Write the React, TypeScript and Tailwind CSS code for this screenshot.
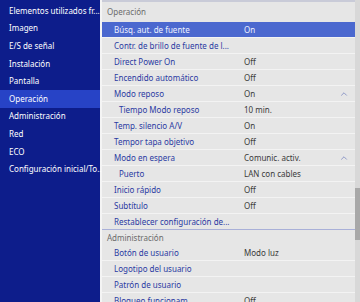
import { ChevronUp } from 'lucide-react';

const menu = [
    'Elementos utilizados fr...',
    'Imagen',
    'E/S de señal',
    'Instalación',
    'Pantalla',
    'Operación',
    'Administración',
    'Red',
    'ECO',
    'Configuración inicial/To...',
];

type Row = { label: string; value?: string; sub?: boolean; open?: boolean; active?: boolean; header?: boolean };

const rows: Row[] = [
    { label: 'Operación', header: true },
    { label: 'Búsq. aut. de fuente', value: 'On', active: true },
    { label: 'Contr. de brillo de fuente de l...' },
    { label: 'Direct Power On', value: 'Off' },
    { label: 'Encendido automático', value: 'Off' },
    { label: 'Modo reposo', value: 'On', open: true },
    { label: 'Tiempo Modo reposo', value: '10 min.', sub: true },
    { label: 'Temp. silencio A/V', value: 'On' },
    { label: 'Tempor tapa objetivo', value: 'Off' },
    { label: 'Modo en espera', value: 'Comunic. activ.', open: true },
    { label: 'Puerto', value: 'LAN con cables', sub: true },
    { label: 'Inicio rápido', value: 'Off' },
    { label: 'Subtítulo', value: 'Off' },
    { label: 'Restablecer configuración de...' },
    { label: 'Administración', header: true },
    { label: 'Botón de usuario', value: 'Modo luz' },
    { label: 'Logotipo del usuario' },
    { label: 'Patrón de usuario' },
    { label: 'Bloqueo funcionam.', value: 'Off' },
];

export default function App() {
    return (
        <div className="flex h-[302px] w-[360px] overflow-hidden bg-[#f4f4f4] text-[8px] font-['Noto_Sans',sans-serif]">
            <div className="flex w-[100px] shrink-0 flex-col bg-[#0d1d8b] pt-[2px]">
                {menu.map((m) => (
                    <div
                        key={m}
                        className={`flex h-[17.6px] items-center whitespace-nowrap pl-[9px] text-white ${m === 'Operación' ? 'bg-[#2743c6]' : ''}`}
                    >
                        {m}
                    </div>
                ))}
            </div>
            <div className="ml-[2px] flex flex-1 flex-col border-t-2 border-[#c9cbd8] bg-[#e6e6e6]">
                <div className="flex-1">
                    {rows.map((r) =>
                        r.header ? (
                            <div
                                key={r.label}
                                className={`flex items-center pl-[5px] text-[#6b6b6b] ${r.label === 'Administración' ? 'h-[16px] border-t border-[#a9b0d8] mt-[-1px]' : 'h-[20px]'}`}
                            >
                                {r.label}
                            </div>
                        ) : (
                            <div
                                key={r.label}
                                className={`flex h-[16px] items-center border-b border-[#f3f3f3] ${r.active ? 'bg-[#4b68cf] text-[#eef1ff]' : ''}`}
                            >
                                <div className={`w-[142px] shrink-0 whitespace-nowrap ${r.sub ? 'pl-[17px]' : 'pl-[12px]'} ${r.active ? '' : 'text-[#2a3aa2]'}`}>
                                    {r.label}
                                </div>
                                <div className={`flex-1 ${r.active ? '' : 'text-[#3a3a3a]'}`}>{r.value}</div>
                                {r.open && <ChevronUp size={10} strokeWidth={1.5} className="mr-[6px] text-[#5b6bb5]" />}
                            </div>
                        )
                    )}
                </div>
            </div>
            <div className="flex w-[5px] shrink-0 flex-col bg-[#d8d8d8] pt-[188px]">
                <div className="h-[52px] bg-[#a8a8a8]" />
            </div>
        </div>
    );
}
